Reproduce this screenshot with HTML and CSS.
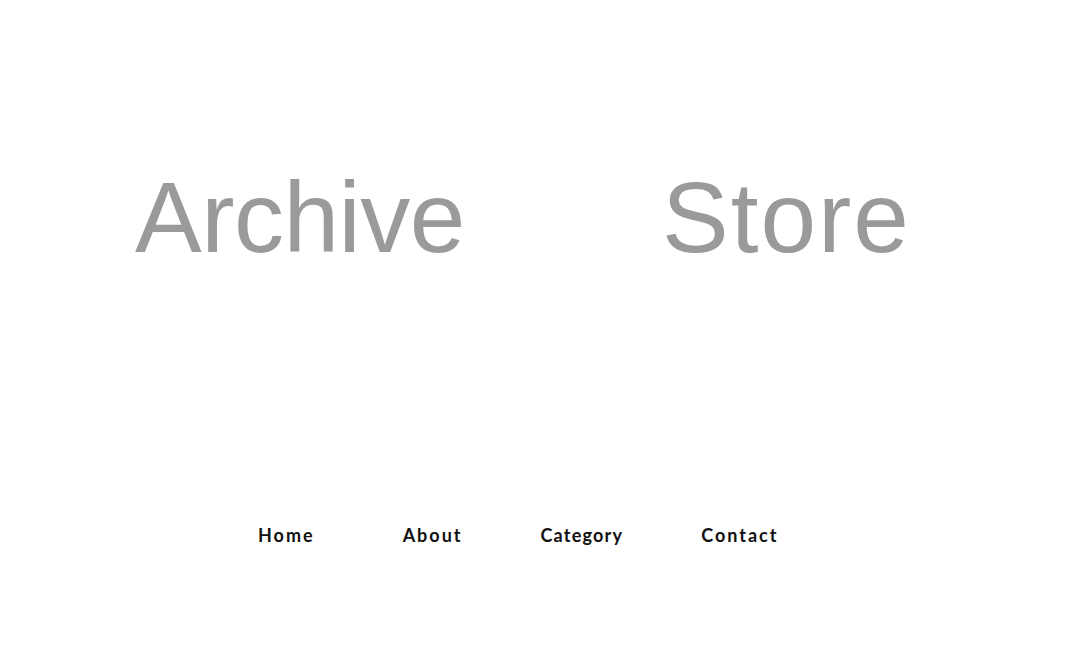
FILE: index.html
```html
<!DOCTYPE html>
<html lang="en">
<head>
    <meta charset="UTF-8">
    <meta name="viewport" content="width=device-width, initial-scale=1.0">
    <title>Archive Store</title>
    <link rel="stylesheet" href="styles.css">
</head>
<body>
    <div class="page">
        <header class="hero">
            <h1 class="hero-word">Archive</h1>
            <h1 class="hero-word store">Store</h1>
        </header>
        <nav class="menu">
            <a href="#" class="menu-link home">Home</a>
            <a href="#" class="menu-link">About</a>
            <a href="#" class="menu-link category">Category</a>
            <a href="#" class="menu-link">Contact</a>
        </nav>
    </div>
</body>
</html>
```

FILE: styles.css
```css
body, html {
    margin: 0;
    padding: 0;
    background-color: #ffffff;
    font-family: "Liberation Sans", Arial, sans-serif;
}
.page {
    width: 100%;
    height: 100vh;
    display: flex;
    flex-direction: column;
}
.hero {
    display: flex;
    gap: 197px;
    padding: 157px 0 0 135px;
    height: 340px;
    box-sizing: border-box;
}
.hero-word {
    margin: 0;
    font-size: 100px;
    font-weight: normal;
    letter-spacing: -0.5px;
    line-height: 120px;
    color: #9a9a9a;
}
.store {
    letter-spacing: 2px;
}
.menu {
    display: flex;
    gap: 78px;
    padding: 184px 0 0 258px;
}
.menu-link {
    font-family: Lato, sans-serif;
    font-weight: bold;
    font-size: 18px;
    letter-spacing: 2px;
    color: #111111;
    text-decoration: none;
}
.home {
    margin-right: 10px;
}
.category {
    letter-spacing: 1.2px;
}
```
